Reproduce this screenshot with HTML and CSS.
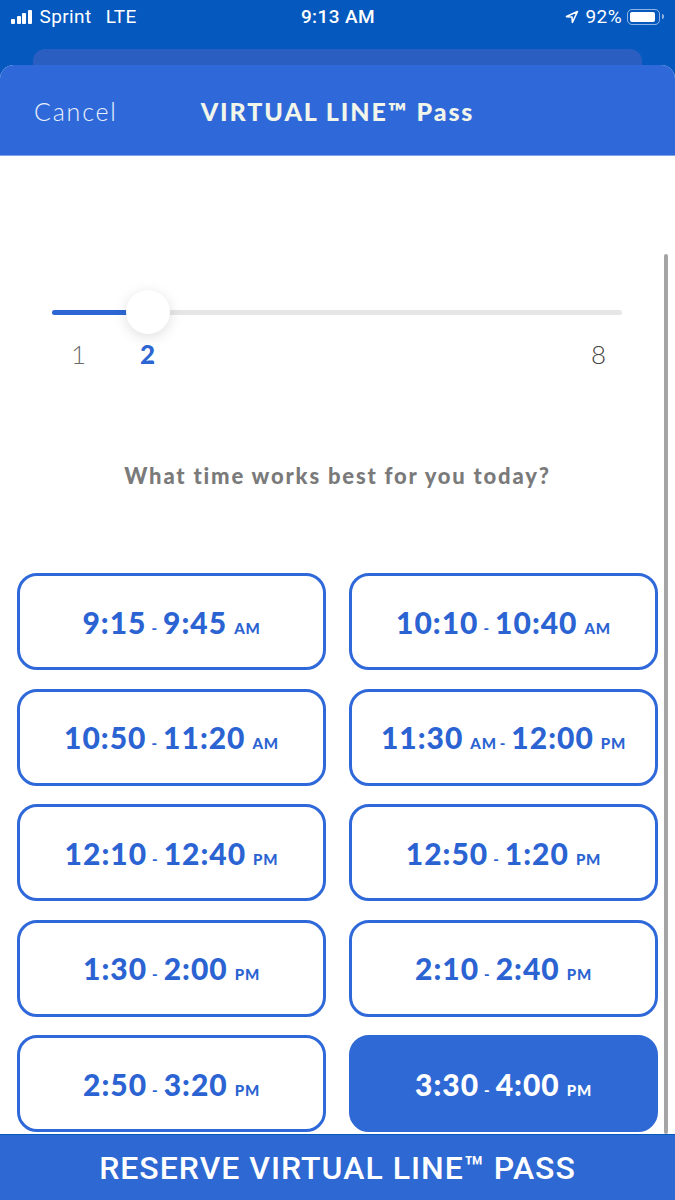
FILE: index.html
```html
<!DOCTYPE html>
<html lang="en">
<head>
  <meta charset="UTF-8">
  <meta name="viewport" content="width=device-width, initial-scale=1.0">
  <title>VIRTUAL LINE Pass</title>
  <link rel="stylesheet" href="styles.css">
</head>
<body>

  <div class="status">
    <div class="status-left">
      <span class="bars"><i></i><i></i><i></i><i></i></span>
      <span>Sprint</span>
      <span class="lte">LTE</span>
    </div>
    <div class="status-time">9:13 AM</div>
    <div class="status-right">
      <svg class="arrow" width="14" height="14" viewBox="0 0 14 14">
        <path d="M12.5 1.5 L1.5 6.6 L7 7 L7.4 12.5 Z" fill="none" stroke="#fff" stroke-width="1.6" stroke-linejoin="round"/>
      </svg>
      <span>92%</span>
      <span class="battery"><span class="battery-level"></span></span>
    </div>
  </div>

  <div class="sheet-back"></div>

  <div class="sheet">
    <header class="sheet-header">
      <span class="cancel">Cancel</span>
      <h1 class="title">VIRTUAL LINE&trade; Pass</h1>
      <span></span>
    </header>

    <main class="content">
      <div class="slider">
        <div class="track"></div>
        <div class="track-fill" style="width: 78px"></div>
        <div class="thumb" style="left: 74px"></div>
      </div>
      <div class="slider-labels">
        <span class="label">1</span>
        <span class="label active">2</span>
        <span class="label last">8</span>
      </div>

      <p class="question">What time works best for you today?</p>

      <div class="times">
        <button class="time"><span class="range"><b>9:15</b><span class="dash">-</span><b>9:45</b><small>AM</small></span></button>
        <button class="time"><span class="range"><b>10:10</b><span class="dash">-</span><b>10:40</b><small>AM</small></span></button>
        <button class="time"><span class="range"><b>10:50</b><span class="dash">-</span><b>11:20</b><small>AM</small></span></button>
        <button class="time"><span class="range"><b>11:30</b><small>AM</small><span class="dash">-</span><b>12:00</b><small>PM</small></span></button>
        <button class="time"><span class="range"><b>12:10</b><span class="dash">-</span><b>12:40</b><small>PM</small></span></button>
        <button class="time"><span class="range"><b>12:50</b><span class="dash">-</span><b>1:20</b><small>PM</small></span></button>
        <button class="time"><span class="range"><b>1:30</b><span class="dash">-</span><b>2:00</b><small>PM</small></span></button>
        <button class="time"><span class="range"><b>2:10</b><span class="dash">-</span><b>2:40</b><small>PM</small></span></button>
        <button class="time"><span class="range"><b>2:50</b><span class="dash">-</span><b>3:20</b><small>PM</small></span></button>
        <button class="time selected"><span class="range"><b>3:30</b><span class="dash">-</span><b>4:00</b><small>PM</small></span></button>
      </div>

      <div class="scrollbar"></div>
    </main>
  </div>

  <button class="reserve">RESERVE VIRTUAL LINE&trade; PASS</button>

</body>
</html>
```

FILE: styles.css
```css
body {
  margin: 0;
  width: 675px;
  height: 1200px;
  overflow: hidden;
  background-color: #0558be;
  font-family: Lato, "Open Sans", sans-serif;
  position: relative;
}

/* status bar */
.status {
  height: 49px;
  display: grid;
  grid-template-columns: 1fr auto 1fr;
  align-items: start;
  color: #fff;
  font-family: Roboto, "Liberation Sans", sans-serif;
  font-size: 19px;
  letter-spacing: 0.4px;
  padding: 5px 10px 0 11px;
  box-sizing: border-box;
}
.status-left {
  display: flex;
  align-items: center;
  gap: 6px;
}
.lte {
  margin-left: 8px;
}
.bars {
  display: flex;
  align-items: flex-end;
  gap: 1.5px;
  height: 14px;
  margin-right: 2px;
}
.bars i {
  display: block;
  width: 4px;
  background: #fff;
  border-radius: 1px;
}
.bars i:nth-child(1) { height: 5px; }
.bars i:nth-child(2) { height: 8px; }
.bars i:nth-child(3) { height: 11px; }
.bars i:nth-child(4) { height: 14px; }
.status-time {
  font-weight: 500;
}
.status-right {
  display: flex;
  align-items: center;
  justify-content: flex-end;
  gap: 5px;
}
.arrow {
  margin-right: 2px;
}
.battery {
  position: relative;
  width: 33px;
  height: 16px;
  border: 1.5px solid rgba(255, 255, 255, 0.55);
  border-radius: 5px;
  padding: 2px;
  box-sizing: border-box;
  margin-right: 5px;
}
.battery::after {
  content: "";
  position: absolute;
  right: -5px;
  top: 4px;
  width: 2px;
  height: 5px;
  background: rgba(255, 255, 255, 0.55);
  border-radius: 0 2px 2px 0;
}
.battery-level {
  display: block;
  height: 100%;
  width: 92%;
  background: #fff;
  border-radius: 2px;
}

/* stacked sheet */
.sheet-back {
  margin: 0 33px;
  height: 16px;
  background: #2b5ec1;
  border-radius: 12px 12px 0 0;
}
.sheet {
  background: #fff;
  border-radius: 14px 14px 0 0;
  overflow: hidden;
}
.sheet-header {
  height: 91px;
  background: #2f69d9;
  display: grid;
  grid-template-columns: 1fr auto 1fr;
  align-items: center;
  padding-top: 2px;
  box-sizing: border-box;
  border-bottom: 1px solid #7fa4e6;
}
.cancel {
  padding-left: 34px;
  color: #eaf0fb;
  font-size: 25px;
  font-weight: 300;
  letter-spacing: 1.8px;
}
.title {
  margin: 0;
  color: #f1f5ea;
  font-size: 25px;
  font-weight: 900;
  letter-spacing: 1.9px;
}

/* content */
.content {
  position: relative;
  height: 978px;
  padding-top: 134px;
  box-sizing: border-box;
}
.slider {
  position: relative;
  margin: 0 53px 0 52px;
  height: 44px;
}
.track {
  position: absolute;
  left: 0;
  right: 0;
  top: 20px;
  height: 5px;
  background: #e6e6e6;
  border-radius: 3px;
}
.track-fill {
  position: absolute;
  left: 0;
  top: 20px;
  height: 5px;
  background: #2d66d4;
  border-radius: 3px;
}
.thumb {
  position: absolute;
  top: 0;
  width: 44px;
  height: 44px;
  border-radius: 50%;
  background: #fff;
  box-shadow: 0 3px 14px rgba(0, 0, 0, 0.13);
}
.slider-labels {
  display: flex;
  padding: 0 69px 0 71px;
  margin-top: 4px;
  font-size: 26px;
  color: #6b6b6b;
  font-weight: 300;
}
.label.active {
  margin-left: 54px;
  color: #2d66d4;
  font-weight: 900;
}
.label.last {
  margin-left: auto;
  color: #444;
}

.question {
  margin: 92px 0 0 0;
  text-align: center;
  color: #7a7a7a;
  font-size: 22px;
  font-weight: 900;
  letter-spacing: 1.8px;
}

.times {
  display: grid;
  grid-template-columns: 309px 309px;
  column-gap: 23px;
  row-gap: 18.5px;
  padding-left: 17px;
  margin-top: 84px;
}
.time {
  height: 97px;
  border: 3px solid #2f69d9;
  border-radius: 20px;
  background: #fff;
  color: #2b63d2;
  font-family: Lato, "Open Sans", sans-serif;
  display: flex;
  align-items: center;
  justify-content: center;
  padding: 0;
}
.range {
  display: inline-flex;
  align-items: baseline;
  line-height: 1;
}
.time b {
  font-size: 30px;
  font-weight: 900;
  letter-spacing: 1px;
}
.time .dash {
  font-size: 15px;
  font-weight: 900;
  margin: 0 6px 0 5px;
}
.time small {
  font-size: 15px;
  font-weight: 900;
  margin-left: 7px;
  letter-spacing: 0.8px;
}
.time small + .dash {
  margin-left: 3px;
}
.time.selected {
  background: #2f69d5;
  border-color: #2f69d5;
  color: #fff;
}

.scrollbar {
  position: absolute;
  right: 7px;
  top: 98px;
  width: 4px;
  height: 880px;
  background: #a5a5a5;
  border-radius: 2px;
}

.reserve {
  position: absolute;
  left: 0;
  bottom: 0;
  width: 675px;
  height: 65px;
  border: none;
  background: #2d68d3;
  color: #fff;
  font-family: Roboto, "Liberation Sans", sans-serif;
  font-size: 32px;
  font-weight: 500;
  letter-spacing: 1px;
  padding: 0;
}
```
